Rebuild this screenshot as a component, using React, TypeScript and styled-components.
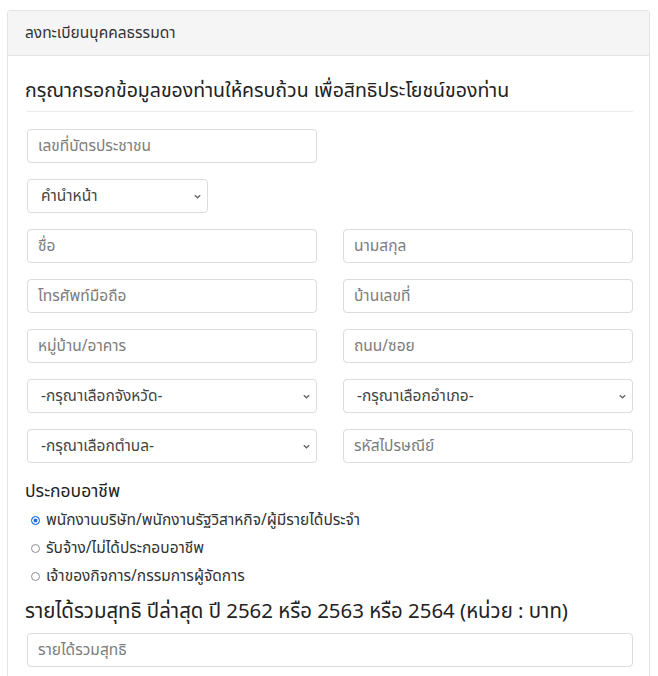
import React from "react";
import styled, { createGlobalStyle } from "styled-components";

const Global = createGlobalStyle`
  * { box-sizing: border-box; }
  body {
    margin: 0;
    background: #ffffff;
    font-family: "Noto Sans Thai", "Noto Sans", "DejaVu Sans", sans-serif;
    color: #212529;
  }
`;

const Page = styled.div`
  padding: 10px 8px 0 7px;
  height: 676px;
  overflow: hidden;
`;

const Card = styled.div`
  border: 1px solid #e4e4e4;
  border-radius: 3px;
  background: #fff;
  height: 700px;
`;

const CardHeader = styled.div`
  background: #f5f5f5;
  border-bottom: 1px solid #e4e4e4;
  height: 45px;
  padding: 0 17px;
  display: flex;
  align-items: center;
  font-size: 15.5px;
  color: #333;
`;

const CardBody = styled.div`
  padding: 18px 16px 0 19px;
`;

const Title = styled.h4`
  margin: 0 0 0 -2px;
  font-size: 19.5px;
  font-weight: 400;
  color: #222;
  line-height: 34px;
  white-space: nowrap;
`;

const Divider = styled.hr`
  margin: 3px 0 17px;
  border: 0;
  border-top: 1px solid #ececec;
`;

const Grid = styled.div`
  display: grid;
  grid-template-columns: 1fr 1fr;
  column-gap: 26px;
  row-gap: 16px;
`;

const Field = styled.div<{ $width?: string }>`
  height: 34px;
  border: 1px solid #dcdcdc;
  border-radius: 4px;
  display: flex;
  align-items: center;
  padding: 0 10px;
  font-size: 15.5px;
  color: #7d7d7d;
  white-space: nowrap;
  width: ${(p) => p.$width ?? "auto"};
`;

const SelectField = styled(Field)`
  justify-content: space-between;
  color: #444;
  padding: 0 5px 0 13px;
`;

const Section = styled.h5`
  margin: 17px 0 0 -2px;
  font-size: 17.5px;
  font-weight: 400;
  color: #222;
  line-height: 24px;
`;

const RadioList = styled.div`
  display: flex;
  flex-direction: column;
  gap: 8px;
  padding: 6px 0 0 4px;
`;

const RadioRow = styled.label`
  display: flex;
  align-items: center;
  gap: 6px;
  font-size: 15.5px;
  color: #333;
  height: 20px;
  white-space: nowrap;
`;

const RadioDot = styled.span<{ $checked?: boolean }>`
  width: 9px;
  height: 9px;
  flex: none;
  border-radius: 50%;
  border: 1px solid ${(p) => (p.$checked ? "#1a73e8" : "#8f8f8f")};
  background: ${(p) => (p.$checked ? "#1a73e8" : "#fff")};
  box-shadow: ${(p) => (p.$checked ? "inset 0 0 0 1.5px #fff" : "none")};
`;

const IncomeLabel = styled.h4`
  margin: 12px 0 7px -2px;
  font-size: 20.4px;
  font-weight: 400;
  color: #222;
  line-height: 28px;
  white-space: nowrap;
`;

const Chevron = () => (
  <svg width="9" height="9" viewBox="0 0 10 10">
    <path d="M2 3.5 L5 6.5 L8 3.5" stroke="#666" strokeWidth="1.5" fill="none" />
  </svg>
);

const Select = ({ label, width }: { label: string; width?: string }) => (
  <SelectField $width={width}>
    <span>{label}</span>
    <Chevron />
  </SelectField>
);

export default function App() {
  return (
    <>
      <Global />
      <Page>
        <Card>
          <CardHeader>ลงทะเบียนบุคคลธรรมดา</CardHeader>
          <CardBody>
            <Title>กรุณากรอกข้อมูลของท่านให้ครบถ้วน เพื่อสิทธิประโยชน์ของท่าน</Title>
            <Divider />
            <Grid>
              <Field>เลขที่บัตรประชาชน</Field>
              <div />
              <Select label="คำนำหน้า" width="181px" />
              <div />
              <Field>ชื่อ</Field>
              <Field>นามสกุล</Field>
              <Field>โทรศัพท์มือถือ</Field>
              <Field>บ้านเลขที่</Field>
              <Field>หมู่บ้าน/อาคาร</Field>
              <Field>ถนน/ซอย</Field>
              <Select label="-กรุณาเลือกจังหวัด-" />
              <Select label="-กรุณาเลือกอำเภอ-" />
              <Select label="-กรุณาเลือกตำบล-" />
              <Field>รหัสไปรษณีย์</Field>
            </Grid>
            <Section>ประกอบอาชีพ</Section>
            <RadioList>
              <RadioRow>
                <RadioDot $checked />
                พนักงานบริษัท/พนักงานรัฐวิสาหกิจ/ผู้มีรายได้ประจำ
              </RadioRow>
              <RadioRow>
                <RadioDot />
                รับจ้าง/ไม่ได้ประกอบอาชีพ
              </RadioRow>
              <RadioRow>
                <RadioDot />
                เจ้าของกิจการ/กรรมการผู้จัดการ
              </RadioRow>
            </RadioList>
            <IncomeLabel>รายได้รวมสุทธิ ปีล่าสุด ปี 2562 หรือ 2563 หรือ 2564 (หน่วย : บาท)</IncomeLabel>
            <Field>รายได้รวมสุทธิ</Field>
          </CardBody>
        </Card>
      </Page>
    </>
  );
}
